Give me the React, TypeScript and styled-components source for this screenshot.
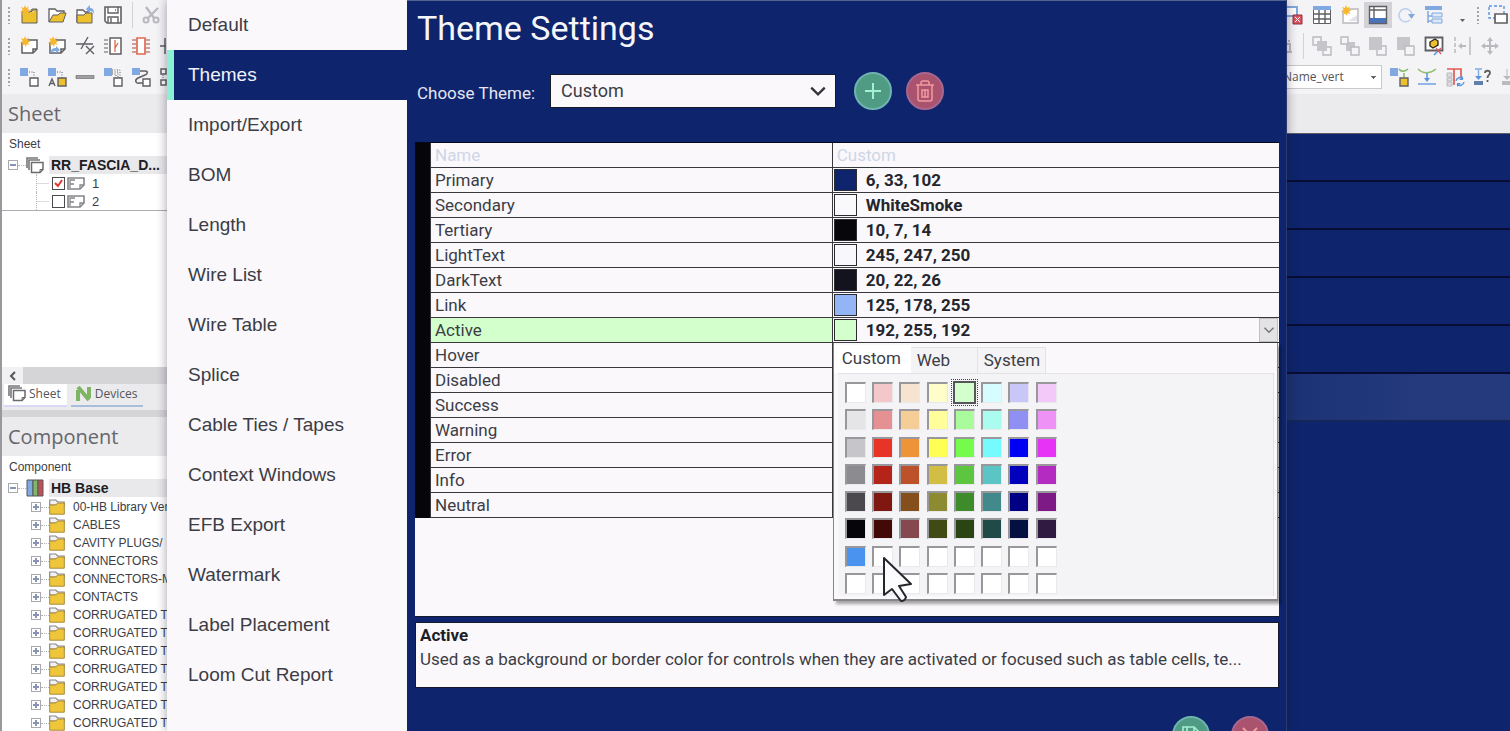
import React from "react";
import styled, { createGlobalStyle, css } from "styled-components";

const GlobalStyle = createGlobalStyle`
  *, *::before, *::after { box-sizing: border-box; }
  html, body { margin: 0; height: 100%; overflow: hidden; }
  button, input, select { font: inherit; color: inherit; }
  button { padding: 0; border: 0; background: none; }
`;

const sans = '"Liberation Sans", Arial, sans-serif';
const ui = 'Roboto, "Liberation Sans", sans-serif';
const humanist = '"Open Sans", "Noto Sans", sans-serif';
const navy = "#0e246c";
const paper = "#faf8fb";
const ink = "#3c3d45";

/* ---------- icons ---------- */

const B = "#7fa9e0";
const Y = "#edc02d";
const G = "#5f5f63";
const L = "#b9b9be";

const Star = () => (
  <path d="M6 0l1.2 3 2.600-1.500-1.100 2.700 3 .8-2.700 1.500 1.600 2.600-2.900-1-.7 3-1.500-2.700L2.900 10l.9-2.900L1 6.400l2.700-1.500L2.200 2l2.700 1z" fill="#f7b731" />
);
const Page = () => <path d="M3 6v11h11l4-4V4H8M18 13h-4v4" fill="#fff" stroke={G} strokeWidth="1.500" />;

const art: Record<string, React.ReactNode> = {
  newFolder: <><path d="M3 7h8l2-3h5v14H3z" fill={Y} stroke={G} /><path d="M12 7l2-2h4" fill="#fff" stroke={G} /><Star /></>,
  open: <><path d="M2 17V4h6l2 2h7v4" fill="#fff" stroke={G} strokeWidth="1.300" /><path d="M2 17l4-7h5l2-2h6l-3 9z" fill={Y} stroke={G} /></>,
  openBack: <><path d="M2 17V5h6l2 2h4v4" fill="#fff" stroke={G} strokeWidth="1.300" /><path d="M2 18V10h7l2-2h6v10z" fill={Y} stroke={G} /><path d="M11 4l4-4v3c3 0 4 2 4 6-1-2-2-3-4-3v3z" fill={B} /></>,
  save: <><path d="M2 2h16v16H4l-2-2z" fill="#fff" stroke={G} strokeWidth="1.600" /><path d="M5 2v6h10V2M5 18v-6h10v6M8 13v5M12 5h1" fill="none" stroke={G} strokeWidth="1.400" /></>,
  cut: <><path d="M5 2l8 11M17 3L7 13" stroke={L} strokeWidth="2.400" /><circle cx="5" cy="15" r="2.500" fill="none" stroke={L} strokeWidth="2" /><circle cx="15" cy="15" r="2.500" fill="none" stroke={L} strokeWidth="2" /></>,
  newSheet: <><Page /><Star /></>,
  newSheetArrow: <><Page /><path d="M3 17c1-4 3-5 6-5v-2l4 4-4 3v-2c-3 0-4 1-6 2z" fill={B} /><Star /></>,
  slashX: <path d="M1 8h17M6 13L13 1M11 10l8 8M19 10l-8 8" stroke={G} strokeWidth="1.400" fill="none" />,
  block: <><path d="M7 2h11v16H7z" fill="#fff" stroke={G} strokeWidth="1.500" /><path d="M1 4h4M1 8h4M1 12h4M1 16h4" stroke={G} /><path d="M12 4v12M12 12l3-5" stroke="#e0593f" strokeWidth="1.200" fill="none" /></>,
  blockRed: <><path d="M6 2h8v16H6z" fill="#fff" stroke="#df6a50" strokeWidth="1.700" /><path d="M1 4h4M1 8h4M1 12h4M1 16h4M15 4h4M15 8h4M15 12h4M15 16h4" stroke="#a05040" /></>,
  cross: <path d="M1 10h6M6 2v16" stroke={G} strokeWidth="1.500" />,
  link: <><path d="M1 1h8v8H1z" fill={B} /><path d="M10 5h5v6" stroke={G} strokeDasharray="1 1.500" fill="none" /><path d="M11 11h8v8h-8z" fill="#fff" stroke={G} strokeWidth="1.400" /></>,
  linkA: <><path d="M1 1h8v8H1z" fill={B} /><path d="M10 5h5v6" stroke={G} strokeDasharray="1 1.500" fill="none" /><path d="M11 11h8v8h-8z" fill={Y} stroke={G} strokeWidth="1.400" /><path d="M2 19l3-7 3 7M3 16.500h4" stroke={G} strokeWidth="1.400" fill="none" /></>,
  bar: <path d="M1 8.500h18v3H1z" fill="#a0a0a4" stroke={G} strokeWidth=".6" />,
  linkMany: <><path d="M1 1h8v8H1z" fill={B} /><path d="M9 3h8v8M9 5h6v6M9 7h4v4" stroke={G} strokeDasharray="1 1.500" fill="none" /><path d="M11 11h8v8h-8z" fill="#fff" stroke={G} strokeWidth="1.400" /></>,
  curve: <><path d="M9 4h5c3 0 3 3 0 4L7 11c-4 2-2 6 1 5h4" stroke={G} strokeWidth="1.500" fill="none" /><path d="M1 1h8v7H1z" fill={B} /><path d="M12 12h7v7h-7z" fill="#fff" stroke={G} strokeWidth="1.400" /></>,
  nodes: <><path d="M2 2h5v5H2zM2 13h5v5H2z" fill="#fff" stroke={G} strokeWidth="1.500" /><path d="M4 8v4" stroke={G} strokeDasharray="1 1" /></>,
  tableDel: <><path d="M1 2h12v9H1z" fill="#fff" stroke={B} strokeWidth="2" /><path d="M9 10h9v9H9z" fill="#d95460" stroke="#93303c" /><path d="M11 12l5 5M16 12l-5 5" stroke="#fff" strokeWidth="1" /></>,
  table: <><path d="M1.500 1.500h17v17h-17z" fill="#fff" stroke={G} /><path d="M1 1h18v4H1z" fill={B} /><path d="M1 9h18M1 14h18M7 5v14M13 5v14" stroke={G} strokeWidth="1.400" /></>,
  picture: <><path d="M3 5v13h15V4H9" fill="#fff" stroke={L} strokeWidth="1.500" /><path d="M8 16l9-6v6z" fill="#e2e4ea" /><Star /></>,
  layout: <><path d="M1.500 1.500h17v17h-17zM6 2v11M2 5h16" fill="#fff" stroke={G} strokeWidth="1.400" /><path d="M2 13h16v5H2z" fill="#4a72b8" /></>,
  redo: <><path d="M14 15a6.500 6.500 0 1 1 2-5" stroke="#b8cff0" strokeWidth="1.500" fill="none" /><path d="M12 9h7l-3.500 5z" fill={B} /></>,
  list: <><path d="M1 1h17v4H1z" fill={B} /><path d="M4 6v12M4 11h4M4 16h4" stroke={B} strokeWidth="1.500" /><path d="M8 8h10v4H8zM8 14h10v4H8z" fill="#dfe9f7" stroke={B} /></>,
  arrowDown: <path d="M8 14h5l-2.500 3z" fill={G} />,
  select: <><path d="M1 1h15v12H1z" fill="none" stroke="#5b93dd" strokeWidth="1.400" strokeDasharray="3 2" /><path d="M7 9h12v9H7z" fill="#fff" stroke={G} strokeWidth="1.700" /></>,
  info: <path d="M8 8h3v8M7 16h6M10 4v2" stroke={L} strokeWidth="2" fill="none" />,
  orderA: <><path d="M1 1h8v8H1zM11 11h8v8h-8z" fill="#f5f5f7" stroke={L} strokeWidth="1.400" /><path d="M5 5h10v10H5z" fill="#c6c6ca" /></>,
  orderB: <><path d="M6 6h9v9H6z" fill="#c6c6ca" /><path d="M1 1h7v7H1zM11 11h8v8h-8z" fill="#f5f5f7" stroke={L} strokeWidth="1.400" /></>,
  orderC: <><path d="M9 10h9v9H9z" fill="#f5f5f7" stroke={L} strokeWidth="1.400" /><path d="M1 1h13v13H1z" fill="#c6c6ca" /></>,
  orderD: <><path d="M1 1h13v13H1z" fill="#c6c6ca" /><path d="M9 10h9v9H9z" fill="#f5f5f7" stroke={L} strokeWidth="1.400" /></>,
  inspect: <><path d="M1.500 1.500h17v13h-17z" fill="#fff" stroke={G} strokeWidth="1.800" /><path d="M6 6l5-3 3 2v4l-5 3-3-2z" fill={Y} stroke="#2e2a1e" strokeWidth="1.400" /><path d="M10 19l3-3" stroke="#5b93dd" strokeWidth="1.600" /><path d="M13 16l4-4M12 12l5 6" stroke="#d95460" strokeWidth="1.200" /></>,
  spread: <><path d="M3 1v18" stroke={L} strokeWidth="1.500" strokeDasharray="4 2" /><path d="M18 1v18" stroke={L} strokeWidth="1.500" /><path d="M6 10l4-3v2h4v2h-4v2z" fill={L} /></>,
  move: <path d="M10 1l3 4h-2v4h4V7l4 3-4 3v-2h-4v4h2l-3 4-3-4h2v-4H5v2l-4-3 4-3v2h4V5H7z" fill={L} />,
  route: <><path d="M1 1h8v8H1z" fill={B} /><path d="M10 2c2 3 6 3 9 0M15 6v4" stroke="#79b860" strokeWidth="1.400" fill="none" /><path d="M11 11h8v8h-8z" fill={Y} stroke={G} strokeWidth="1.400" /></>,
  routeDown: <><path d="M1 2c5 5 12 5 18 0" stroke="#8fbf6a" strokeWidth="1.400" fill="none" /><path d="M10 6v7" stroke="#5b93dd" strokeWidth="1.500" /><path d="M7 11h6l-3 4z" fill="#5b93dd" /><path d="M1 17h18" stroke="#5b93dd" strokeWidth="1.300" /></>,
  swap: <><path d="M2 2h14v8M9 2v16" stroke="#df5b55" strokeWidth="1.700" fill="none" /><path d="M2 6h5v4H2zM2 11h5v3H2zM2 15h5v4H2z" fill="#ddd" stroke={L} /><path d="M11 14a4 4 0 0 1 7-2M19 15a4 4 0 0 1-7 2" stroke="#5b93dd" strokeWidth="1.500" fill="none" /><path d="M18 9v4h-4zM12 20v-4h4z" fill="#5b93dd" /></>,
  help: <><path d="M2 2h7M5.500 3v7" stroke={B} strokeWidth="1.400" /><path d="M2 9h7l-3.500 4z" fill="#5b93dd" /><path d="M1 14h9v4H1z" fill="#5f7fae" /><path d="M12 6c0-3 5-3 5 0 0 2-2.500 2-2.500 5M14.500 13v2" stroke={G} strokeWidth="1.800" fill="none" /></>,
  down: <><path d="M6 2v8" stroke={L} /><path d="M2 9h8l-4 4zM1 14h10v4H1z" fill={L} /></>,
};

const Svg = styled.svg`
  display: block;
  flex: none;
`;

const Art = ({ name }: { name: string }) => (
  <Svg width="20" height="20" viewBox="0 0 20 20" aria-hidden="true">{art[name]}</Svg>
);

const Sheets = () => (
  <Svg width="18" height="17" viewBox="0 0 18 17" aria-hidden="true">
    <path d="M1 11V1h11M3 13V3h11" fill="none" stroke="#77777b" strokeWidth="1.600" />
    <path d="M5.500 5.500h11.500v7l-3 3H5.500z" fill="#fff" stroke="#6b6b6f" strokeWidth="1.500" />
    <path d="M17 12.500h-3v3" fill="none" stroke="#6b6b6f" />
  </Svg>
);

const Frame = () => (
  <Svg width="18" height="13" viewBox="0 0 18 13" aria-hidden="true">
    <path d="M1 1h16v7l-4 4H1z" fill="#fff" stroke="#85858a" strokeWidth="1.600" />
    <path d="M17 8h-4v4M3 11V3h5M3 7h4" fill="none" stroke="#85858a" strokeWidth="1.300" />
  </Svg>
);

const Books = () => (
  <Svg width="18" height="18" viewBox="0 0 18 18" aria-hidden="true">
    <path d="M1 1h6v16H1z" fill="#7fa9e0" stroke="#55565c" />
    <path d="M7 1h5v16H7z" fill="#7fb764" stroke="#55565c" />
    <path d="M12 1h5v16h-5z" fill="#c25058" stroke="#55565c" />
  </Svg>
);

const Folder = () => (
  <Svg width="16" height="16" viewBox="0 0 16 16" aria-hidden="true">
    <path d="M.7 2V1h6l2 2h6.500v3H.7z" fill="#f2f2f4" stroke="#88888c" strokeWidth="1.200" />
    <path d="M.7 6h6l2-2h6.600v11.200H.7z" fill="#efc53a" stroke="#a98a3a" strokeWidth="1" />
  </Svg>
);

const Chevron = ({ size, color }: { size: number; color: string }) => (
  <Svg width={size} height={size} viewBox="0 0 16 16" aria-hidden="true">
    <path d="M2 5l6 6 6-6" fill="none" stroke={color} strokeWidth="2" />
  </Svg>
);

/* ---------- shell ---------- */

const Shell = styled.div`
  display: flex;
  height: 100vh;
  overflow: hidden;
  background: ${navy};
`;

const LeftDock = styled.aside`
  flex: 0 0 167px;
  display: flex;
  flex-direction: column;
  overflow: hidden;
  border-left: 2px solid #9a989d;
  background: #fff;
  color: ${ink};
  font-family: ${sans};
  font-size: 12px;
`;

const ToolArea = styled.div`
  flex: none;
  height: 94px;
  padding-top: 1px;
  overflow: hidden;
  background: #f4f3f6;
`;

const ToolRow = styled.div<{ $pull?: boolean }>`
  display: flex;
  align-items: center;
  height: 31px;
  margin-left: ${(p) => (p.$pull ? "-7px" : "5px")};
  padding-bottom: 4px;
`;

const Grip = styled.span`
  flex: none;
  width: 8px;
  height: 18px;
  background: radial-gradient(circle, #a3a3a8 1px, transparent 1px) 0 0 / 4px 4px repeat-y;
`;

const Tool = styled.button<{ $on?: boolean; $narrow?: boolean }>`
  display: flex;
  flex: none;
  align-items: center;
  justify-content: center;
  width: ${(p) => (p.$narrow ? "18px" : "28px")};
  height: 26px;
  background: ${(p) => (p.$on ? "#d3d2d6" : "none")};
`;

const Divider = styled.span`
  flex: none;
  width: 1px;
  height: 26px;
  margin: 0 4px 0 5px;
  background: #d2d1d5;
`;

const PanelTitle = styled.h2`
  flex: none;
  margin: 0;
  padding-left: 6px;
  background: #ebeaec;
  color: #66666b;
  font: 400 20px/39px ${humanist};
`;

const ColumnLabel = styled.div`
  flex: none;
  padding: 0 7px;
  line-height: 23px;
`;

const SheetTree = styled.div`
  flex: none;
  height: 211px;
`;

const SheetRows = styled.div`
  border-bottom: 1px solid #aeadb1;
`;

const Row = styled.div<{ $indent?: number }>`
  display: flex;
  flex: none;
  align-items: center;
  height: 18px;
  padding-left: ${(p) => p.$indent ?? 6}px;
  white-space: nowrap;
`;

const Toggle = styled.button`
  position: relative;
  flex: none;
  width: 10px;
  height: 10px;
  border: 1px solid #aaa9ae;
  background: #fff;
  &::before {
    content: "";
    position: absolute;
    left: 1px;
    top: 3px;
    width: 6px;
    height: 2px;
    background: #8794b5;
  }
`;

const PlusToggle = styled(Toggle)`
  &::after {
    content: "";
    position: absolute;
    left: 3px;
    top: 1px;
    width: 2px;
    height: 6px;
    background: #8794b5;
  }
`;

const Dots = styled.span<{ $w: number }>`
  flex: none;
  width: ${(p) => p.$w}px;
  border-top: 1px dotted #b5b5ba;
`;

const Branch = styled.span`
  flex: none;
  width: 16px;
  height: 18px;
  border-left: 1px dotted #b5b5ba;
  background: linear-gradient(#dcdce0, #dcdce0) 0 9px / 12px 1px no-repeat;
`;

const RootName = styled.strong`
  flex: 1;
  margin-left: 5px;
  padding-left: 2px;
  background: #e9e8eb;
  color: #1d1d22;
  font-size: 14px;
  line-height: 18px;
`;

const SheetLabel = styled.label`
  display: flex;
  align-items: center;
  gap: 1px;
  font-size: 13px;
`;

const TickBox = styled.span`
  display: grid;
  place-items: center;
  margin-right: 1px;
  & > * { grid-area: 1 / 1; }
  & > svg { visibility: hidden; pointer-events: none; }
  & > input:checked + svg { visibility: visible; }
`;

const Tick = styled.input`
  appearance: none;
  width: 13px;
  height: 13px;
  margin: 0;
  border: 1px solid #4a4a4e;
  background: #fff;
`;

const SheetNumber = styled.span`
  margin-left: 6px;
`;

const HScroll = styled.div`
  display: flex;
  flex: none;
  height: 17px;
  background: #d5d4d7;
`;

const HScrollButton = styled.button`
  display: flex;
  align-items: center;
  justify-content: center;
  width: 21px;
  background: #f1f0f3;
`;

const DockTabs = styled.div`
  display: flex;
  flex: none;
  gap: 4px;
  height: 26px;
  padding: 0 0 2px 2px;
  background: #ebeaec;
`;

const DockTab = styled.button<{ $on?: boolean }>`
  display: flex;
  align-items: center;
  gap: 3px;
  height: 23px;
  padding: 0 6px 2px 4px;
  border-bottom: 2px solid ${(p) => (p.$on ? "#d9d9f6" : "#a9bddd")};
  background: ${(p) => (p.$on ? "#fff" : "none")};
  color: #55555a;
  font: 400 12px/18px ${humanist};
`;

const Splitter = styled.div`
  flex: none;
  height: 7px;
  background: #d5d4d7;
`;

const Folders = styled.ul`
  margin: 1px 0 0;
  padding: 0;
  list-style: none;
`;

const FolderRow = styled.li`
  display: flex;
  align-items: center;
  height: 18px;
  padding-left: 29px;
  white-space: nowrap;
`;

const FolderName = styled.span`
  margin-left: 8px;
`;

/* ---------- dialog ---------- */

const Dialog = styled.section`
  position: relative;
  z-index: 1;
  flex: 1;
  display: flex;
  min-width: 0;
  border-right: 1px solid #2b3a72;
  background: ${navy};
  box-shadow: 0 0 10px rgba(20, 20, 40, 0.4);
`;

const Nav = styled.nav`
  flex: 0 0 240px;
  background: ${paper};
`;

const NavItem = styled.a<{ $on?: boolean }>`
  display: block;
  padding-left: ${(p) => (p.$on ? "14px" : "21px")};
  border-left: ${(p) => (p.$on ? "7px solid #8df0d2" : "0")};
  background: ${(p) => (p.$on ? navy : "none")};
  color: ${(p) => (p.$on ? "#f1f2f8" : ink)};
  font: 400 19px/50px ${sans};
  text-decoration: none;
`;

const Main = styled.main`
  flex: 1;
  display: flex;
  flex-direction: column;
  min-width: 0;
  padding: 0 7px 0 8px;
  border-top: 1px solid #53618f;
  color: ${ink};
  font: 400 17px/24px ${ui};
`;

const Title = styled.h1`
  flex: none;
  margin: 0;
  padding-left: 2px;
  color: #f5f6fa;
  font: 400 34px/55px ${ui};
`;

const ChooseRow = styled.div`
  display: flex;
  flex: none;
  align-items: center;
  gap: 14px;
  height: 69px;
  margin-bottom: 17px;
  padding-left: 2px;
`;

const ChooseLabel = styled.label`
  flex: none;
  width: 119px;
  padding-top: 5px;
  color: #e3e6f1;
  white-space: nowrap;
`;

const SelectBox = styled.div`
  display: grid;
  align-items: center;
  width: 286px;
  margin-right: 4px;
  & > * { grid-area: 1 / 1; }
  & > svg { justify-self: end; margin-right: 9px; pointer-events: none; }
`;

const ThemeSelect = styled.select`
  appearance: none;
  width: 100%;
  height: 34px;
  padding: 0 10px;
  border: 1px solid #16182c;
  border-radius: 0;
  background: ${paper};
  color: ${ink};
  font: 400 18px/24px ${ui};
`;

const Round = styled.button<{ $tone: "green" | "red" }>`
  display: flex;
  flex: none;
  align-items: center;
  justify-content: center;
  width: 38px;
  height: 38px;
  border: 2px solid ${(p) => (p.$tone === "green" ? "#6fb3b0" : "#a8678f")};
  border-radius: 50%;
  background: ${(p) => (p.$tone === "green" ? "#4f9b83" : "#a9536e")};
  color: ${(p) => (p.$tone === "green" ? "#a5f0d3" : "#f39aa2")};
`;

const GridPanel = styled.div`
  flex: none;
  height: 475px;
  border-top: 1px solid #05071c;
  border-bottom: 1px solid #16182c;
  background: ${paper};
`;

const Grid = styled.table`
  width: 100%;
  table-layout: fixed;
  border-collapse: separate;
  border-spacing: 0;
`;

const cell = css`
  height: 25px;
  padding: 0;
  border-bottom: 1px solid #39383d;
  line-height: 22px;
  text-align: left;
`;

const Stub = styled.td`
  ${cell}
  border-color: #05050a;
  background: #05050a;
`;

const HeadCell = styled.th`
  ${cell}
  padding-left: 4px;
  border-left: 1px solid #39383d;
  color: #cdd6e6;
  font-weight: 400;
`;

const NameCell = styled.th<{ $on: boolean }>`
  ${cell}
  padding-left: 4px;
  border-left: 1px solid #39383d;
  background: ${(p) => (p.$on ? "#d3ffcd" : "none")};
  font-weight: 400;
`;

const ValueCell = styled.td`
  ${cell}
  position: relative;
  border-left: 1px solid #39383d;
  color: #25262d;
  font-weight: 700;
`;

const Value = styled.div`
  display: flex;
  align-items: center;
  gap: 9px;
  height: 24px;
  padding-left: 1px;
`;

const Chip = styled.span<{ $color: string }>`
  flex: none;
  width: 23px;
  height: 22px;
  border: 1px solid #2c2b30;
  background: ${(p) => p.$color};
`;

const DropButton = styled.button`
  display: flex;
  align-items: center;
  justify-content: center;
  width: 19px;
  height: 24px;
  margin: 0 1px 0 auto;
  border: 1px solid #c0bfc3;
  background: #e3e2e5;
`;

const Popup = styled.div`
  position: absolute;
  z-index: 2;
  top: 25px;
  left: 0;
  right: 1px;
  height: 258px;
  padding: 2px 3px 3px 0;
  border: 1px solid #87868b;
  border-top: 0;
  border-bottom: 2px solid #87868b;
  background: ${paper};
  box-shadow: 3px 3px 3px rgba(0, 0, 0, 0.35);
  color: ${ink};
  font-weight: 400;
`;

const PopupTabs = styled.div`
  display: flex;
  align-items: flex-end;
`;

const PopupTab = styled.button<{ $on?: boolean; $w: number }>`
  width: ${(p) => p.$w}px;
  height: ${(p) => (p.$on ? "28px" : "26px")};
  padding: 0 0 ${(p) => (p.$on ? "3px" : "2px")} ${(p) => (p.$on ? "7px" : "6px")};
  border: 1px solid ${(p) => (p.$on ? "#fff" : "#e3e2e6")};
  border-left-width: ${(p) => (p.$on ? "1px" : "0")};
  border-bottom: 0;
  background: ${(p) => (p.$on ? "#fff" : "#f4f3f6")};
  text-align: left;
`;

const PaletteArea = styled.div`
  margin-left: 4px;
  padding: 8px 7px 2px;
  border-top: 1px solid #e3e2e6;
  border-right: 1px solid #e3e2e6;
  background: #f4f3f6;
`;

const Palette = styled.div`
  display: grid;
  grid-template-columns: repeat(8, 21px);
  grid-auto-rows: 21px;
  justify-content: space-between;
  align-content: space-between;
  width: 212px;
  height: 212px;
`;

const Swatch = styled.button<{ $color: string; $on: boolean }>`
  border: 2px solid;
  border-color: #98979c #e9e8ec #e9e8ec #98979c;
  border-right-width: 1px;
  border-bottom-width: 1px;
  background: ${(p) => p.$color};
  ${(p) =>
    p.$on &&
    css`
      border: 1px solid #55555a;
      box-shadow: 0 0 0 1px #55555a;
      outline: 1px dotted #444;
      outline-offset: 2px;
    `}
`;

const Pointer = styled.svg`
  position: absolute;
  left: 48px;
  top: 213px;
  pointer-events: none;
`;

const HelpPanel = styled.div`
  flex: none;
  height: 66px;
  margin-top: 5px;
  padding: 0 4px;
  border: 1px solid #16182c;
  background: ${paper};
`;

const HelpTitle = styled.strong`
  display: block;
  color: #1d1e26;
`;

const HelpText = styled.p`
  margin: 0;
  overflow: hidden;
  white-space: nowrap;
`;

const Footer = styled.footer`
  display: flex;
  flex: none;
  gap: 21px;
  justify-content: flex-end;
  margin-top: 28px;
  padding-right: 10px;
`;

/* ---------- right ---------- */

const RightDock = styled.aside`
  flex: 0 0 223px;
  display: flex;
  flex-direction: column;
  overflow: hidden;
`;

const Combo = styled.select`
  appearance: none;
  flex: none;
  width: 102px;
  height: 24px;
  margin-right: 3px;
  padding: 0 0 0 2px;
  border: 1px solid #c9c8cc;
  border-radius: 0;
  background: linear-gradient(#66666b, #66666b) 90px 10px / 5px 1px no-repeat,
    linear-gradient(#66666b, #66666b) 91px 11px / 3px 1px no-repeat,
    linear-gradient(#66666b, #66666b) 92px 12px / 1px 1px no-repeat, #fff;
  color: #55555a;
  font: 400 12px/20px ${humanist};
`;

const Band = styled.div`
  flex: none;
  height: 40px;
  border-bottom: 1px solid #5d5c62;
  background: #ebeaec;
`;

const Slot = styled.div<{ $on?: boolean }>`
  flex: none;
  height: 48px;
  border-bottom: 2px solid ${(p) => (p.$on ? "#152659" : "#060c34")};
  background: ${(p) => (p.$on ? "linear-gradient(90deg, #1b3274, #243a7c 60%)" : navy)};
`;

/* ---------- data ---------- */

const navItems = ["Default", "Themes", "Import/Export", "BOM", "Length", "Wire List", "Wire Table", "Splice", "Cable Ties / Tapes", "Context Windows", "EFB Export", "Watermark", "Label Placement", "Loom Cut Report"];

const folders = ["00-HB Library Ver", "CABLES", "CAVITY PLUGS/", "CONNECTORS", "CONNECTORS-M", "CONTACTS", ...Array(7).fill("CORRUGATED T")];

const colors: [string, string, string][] = [
  ["Primary", "6, 33, 102", navy],
  ["Secondary", "WhiteSmoke", "#f9f8fb"],
  ["Tertiary", "10, 7, 14", "#06060b"],
  ["LightText", "245, 247, 250", "#f8f8fc"],
  ["DarkText", "20, 22, 26", "#12131c"],
  ["Link", "125, 178, 255", "#93b5f6"],
  ["Active", "192, 255, 192", "#d3ffcd"],
  ["Hover", "", ""],
  ["Disabled", "", ""],
  ["Success", "", ""],
  ["Warning", "", ""],
  ["Error", "", ""],
  ["Info", "", ""],
  ["Neutral", "", ""],
];

const palette = (
  "#ffffff #f4c8ca #f6e3d0 #fffecb #d3ffcd #d5fdff #c9c7f8 #f2c9f8 " +
  "#e5e4e7 #e59092 #f4ce96 #fffe9b #a9fb9b #a9fcee #8f8ff4 #ee93f5 " +
  "#c6c5ca #e73427 #ee9438 #fffe54 #75fb4c #75fbfd #0000f5 #e733f5 " +
  "#8c8b8f #b42419 #bd512a #d2bd45 #5dc540 #5bc5c6 #0000bd #b42bc2 " +
  "#4b494d #7e1811 #854f1b #8d8b32 #3e8b2b #41898b #000085 #7d1a85 " +
  "#05050a #420907 #85484f #3f4a15 #2b4413 #1f4a48 #040f42 #301a42 " +
  "#4a94f0"
).split(" ");
const swatches = Array.from({ length: 64 }, (_, i) => palette[i] ?? "#ffffff");

const tools = (names: string[]) => names.map((n) => <Tool key={n} type="button" aria-label={n}><Art name={n} /></Tool>);

const SheetTick = ({ checked }: { checked?: boolean }) => (
  <TickBox>
    <Tick type="checkbox" defaultChecked={checked} />
    <Svg width="11" height="11" viewBox="0 0 11 11" aria-hidden="true"><path d="M2 5l3 3 4-6" fill="none" stroke="#d93a2b" strokeWidth="2" /></Svg>
  </TickBox>
);

const ColorPopup = () => (
  <Popup>
    <PopupTabs role="tablist">
      <PopupTab type="button" role="tab" $on $w={77}>Custom</PopupTab>
      <PopupTab type="button" role="tab" $w={67}>Web</PopupTab>
      <PopupTab type="button" role="tab" $w={68}>System</PopupTab>
    </PopupTabs>
    <PaletteArea>
      <Palette>
        {swatches.map((c, i) => <Swatch key={i} type="button" aria-label={c} $color={c} $on={i === 4} />)}
      </Palette>
    </PaletteArea>
    <Pointer width="32" height="48" viewBox="-2 -2 32 48" aria-hidden="true">
      <path d="M0 0L27 26 15 28 22 39Q21 43 17 43L8 31 0 37z" fill="#fcfbfe" stroke="#26252c" strokeWidth="2" strokeLinejoin="round" />
    </Pointer>
  </Popup>
);

export default function App() {
  return (
    <>
      <GlobalStyle />
      <Shell>
        <LeftDock>
          <ToolArea>
            <ToolRow><Grip />{tools(["newFolder", "open", "openBack", "save"])}<Divider />{tools(["cut"])}</ToolRow>
            <ToolRow><Grip />{tools(["newSheet", "newSheetArrow", "slashX", "block", "blockRed", "cross"])}</ToolRow>
            <ToolRow><Grip />{tools(["link", "linkA", "bar", "linkMany", "curve", "nodes"])}</ToolRow>
          </ToolArea>
          <PanelTitle>Sheet</PanelTitle>
          <ColumnLabel>Sheet</ColumnLabel>
          <SheetTree>
            <SheetRows>
              <Row><Toggle type="button" aria-label="Collapse" /><Dots $w={8} /><Sheets /><RootName>RR_FASCIA_D...</RootName></Row>
              <Row $indent={34}><Branch /><SheetLabel><SheetTick checked /><Frame /><SheetNumber>1</SheetNumber></SheetLabel></Row>
              <Row $indent={34}><Branch /><SheetLabel><SheetTick /><Frame /><SheetNumber>2</SheetNumber></SheetLabel></Row>
            </SheetRows>
          </SheetTree>
          <HScroll>
            <HScrollButton type="button" aria-label="Scroll left">
              <Svg width="8" height="10" viewBox="0 0 8 10"><path d="M6 1L2 5l4 4" fill="none" stroke="#55555a" strokeWidth="2" /></Svg>
            </HScrollButton>
          </HScroll>
          <DockTabs>
            <DockTab type="button" $on><Sheets />Sheet</DockTab>
            <DockTab type="button">
              <Svg width="17" height="16" viewBox="0 0 17 16"><path d="M3 15V4M3 1L14 14M14 12V1" fill="none" stroke="#7db564" strokeWidth="4" /></Svg>
              Devices
            </DockTab>
          </DockTabs>
          <Splitter />
          <PanelTitle>Component</PanelTitle>
          <ColumnLabel>Component</ColumnLabel>
          <Row><Toggle type="button" aria-label="Collapse" /><Dots $w={8} /><Books /><RootName>HB Base</RootName></Row>
          <Folders>
            {folders.map((f, i) => (
              <FolderRow key={i}><PlusToggle type="button" aria-label="Expand" /><Dots $w={8} /><Folder /><FolderName>{f}</FolderName></FolderRow>
            ))}
          </Folders>
        </LeftDock>

        <Dialog role="dialog" aria-label="Theme Settings">
          <Nav>
            {navItems.map((n) => <NavItem key={n} href="#" $on={n === "Themes"}>{n}</NavItem>)}
          </Nav>
          <Main>
            <Title>Theme Settings</Title>
            <ChooseRow>
              <ChooseLabel htmlFor="theme">Choose Theme:</ChooseLabel>
              <SelectBox>
                <ThemeSelect id="theme"><option>Custom</option></ThemeSelect>
                <Chevron size={18} color="#33333a" />
              </SelectBox>
              <Round type="button" $tone="green" aria-label="Add theme">
                <Svg width="16" height="16" viewBox="0 0 16 16"><path d="M8 0v16M0 8h16" stroke="currentColor" strokeWidth="2" /></Svg>
              </Round>
              <Round type="button" $tone="red" aria-label="Delete theme">
                <Svg width="20" height="24" viewBox="0 0 20 24">
                  <path d="M1 6h18M6 6V4q0-2 2-2h4q2 0 2 2v2M3 6v14q0 2 2 2h10q2 0 2-2V6M7 11h6v7H7zM10 11v7" fill="none" stroke="currentColor" strokeWidth="1.500" />
                </Svg>
              </Round>
            </ChooseRow>
            <GridPanel>
              <Grid>
                <colgroup><col style={{ width: 15 }} /><col style={{ width: "46.5%" }} /><col /></colgroup>
                <thead>
                  <tr><Stub as="th" /><HeadCell scope="col">Name</HeadCell><HeadCell scope="col">Custom</HeadCell></tr>
                </thead>
                <tbody>
                  {colors.map(([name, value, color]) => (
                    <tr key={name}>
                      <Stub />
                      <NameCell scope="row" $on={name === "Active"}>{name}</NameCell>
                      <ValueCell>
                        {value && (
                          <Value>
                            <Chip $color={color} />
                            {value}
                            {name === "Active" && <DropButton type="button" aria-label="Pick colour"><Chevron size={12} color="#77767b" /></DropButton>}
                          </Value>
                        )}
                        {name === "Active" && <ColorPopup />}
                      </ValueCell>
                    </tr>
                  ))}
                </tbody>
              </Grid>
            </GridPanel>
            <HelpPanel>
              <HelpTitle>Active</HelpTitle>
              <HelpText>Used as a background or border color for controls when they are activated or focused such as table cells, te...</HelpText>
            </HelpPanel>
            <Footer>
              <Round type="button" $tone="green" aria-label="Save">
                <Svg width="20" height="20" viewBox="0 0 20 20"><path d="M2 2h11l5 5v11H2zM6 2v5h7V3M6 18v-6h8v6" fill="none" stroke="currentColor" strokeWidth="1.600" /></Svg>
              </Round>
              <Round type="button" $tone="red" aria-label="Cancel">
                <Svg width="16" height="16" viewBox="0 0 16 16"><path d="M1 1l14 14M15 1L1 15" stroke="currentColor" strokeWidth="2" /></Svg>
              </Round>
            </Footer>
          </Main>
        </Dialog>

        <RightDock>
          <ToolArea>
            <ToolRow $pull>
              {tools(["tableDel", "table", "picture"])}
              <Tool type="button" $on aria-label="layout"><Art name="layout" /></Tool>
              {tools(["redo", "list", "arrowDown"])}<Grip />{tools(["select"])}
            </ToolRow>
            <ToolRow $pull>
              <Tool type="button" $narrow aria-label="info"><Art name="info" /></Tool><Divider />
              {tools(["orderA", "orderB", "orderC", "orderD", "inspect", "spread", "move"])}
            </ToolRow>
            <ToolRow $pull>
              <Combo aria-label="Attribute"><option>Name_vert</option></Combo>
              {tools(["route", "routeDown", "swap", "help", "down"])}
            </ToolRow>
          </ToolArea>
          <Band />
          {[0, 1, 2, 3, 4].map((i) => <Slot key={i} />)}
          <Slot $on />
        </RightDock>
      </Shell>
    </>
  );
}
